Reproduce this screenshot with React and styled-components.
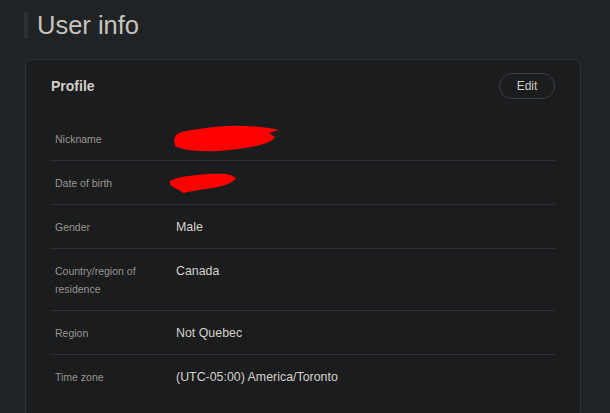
import React from "react";
import styled, { createGlobalStyle } from "styled-components";

const GlobalStyle = createGlobalStyle`
  body {
    margin: 0;
    background: #202325;
    font-family: "Liberation Sans", Arial, sans-serif;
  }
`;

const Page = styled.div`
  padding: 12px 29px 0 24px;
  min-height: 413px;
  box-sizing: border-box;
`;

const Title = styled.h1`
  margin: 0 0 20px;
  height: 27px;
  display: flex;
  align-items: center;
  border-left: 4px solid #2c3033;
  padding-left: 9px;
  font-size: 25.5px;
  font-weight: 400;
  color: #c8c3bb;
  line-height: 27px;
`;

const Card = styled.section`
  margin-left: 1px;
  background: #1b1c1e;
  border: 1px solid #2f3235;
  border-radius: 7px;
  padding: 13px 25px 20px 24px;
`;

const Header = styled.div`
  display: flex;
  justify-content: space-between;
  align-items: center;
  height: 26px;
  margin-bottom: 18px;
`;

const CardTitle = styled.h2`
  margin: 0 0 0 1px;
  font-size: 14px;
  font-weight: 700;
  color: #d2cdc6;
`;

const EditButton = styled.button`
  height: 26px;
  width: 56px;
  border-radius: 13px;
  border: 1px solid #3b3f42;
  background: transparent;
  color: #cfcac3;
  font-family: inherit;
  font-size: 12px;
  cursor: pointer;
`;

const Row = styled.div`
  display: flex;
  align-items: ${(p) => (p.$top ? "flex-start" : "center")};
  padding: 13px 5px 12px;
  border-bottom: ${(p) => (p.$last ? "none" : "1px solid #2e3033")};
`;

const Label = styled.div`
  width: 108px;
  flex-shrink: 0;
  font-size: 10.5px;
  line-height: 18px;
  color: #9a958e;
`;

const Value = styled.div`
  margin-left: 13px;
  min-height: 18px;
  font-size: 12.4px;
  line-height: 18px;
  color: #d6d1ca;
  position: relative;
`;

const ScribbleSvg = styled.svg`
  position: absolute;
  left: ${(p) => p.$x}px;
  top: ${(p) => p.$y}px;
`;

const Scribble = ({ w, h, x, y, d }) => (
  <ScribbleSvg width={w} height={h} viewBox={`0 0 ${w} ${h}`} $x={x} $y={y}>
    <path d={d} fill="#ff0000" />
  </ScribbleSvg>
);

const rows = [
  {
    label: "Nickname",
    value: (
      <Scribble
        w={108}
        h={28}
        x={-3}
        y={-5}
        d="M4 9 C10 6 18 5 26 4 C40 2 56 0 72 1 C84 1 96 3 106 5 L96 8 L102 12 C98 18 86 21 72 23 C58 25 44 27 30 26 C18 26 8 24 2 21 L1 14 Z"
      />
    ),
  },
  {
    label: "Date of birth",
    value: (
      <Scribble
        w={68}
        h={21}
        x={-7}
        y={-1}
        d="M1 8 C6 5 16 3 28 2 C40 1 52 0 62 2 L67 5 C63 11 54 13 44 15 C34 16 24 18 14 20 L10 17 C5 15 2 13 1 11 Z"
      />
    ),
  },
  { label: "Gender", value: "Male" },
  { label: "Country/region of residence", value: "Canada", top: true },
  { label: "Region", value: "Not Quebec" },
  { label: "Time zone", value: "(UTC-05:00) America/Toronto", last: true },
];

export default function App() {
  return (
    <>
      <GlobalStyle />
      <Page>
        <Title>User info</Title>
        <Card>
          <Header>
            <CardTitle>Profile</CardTitle>
            <EditButton>Edit</EditButton>
          </Header>
          {rows.map((r) => (
            <Row key={r.label} $top={r.top} $last={r.last}>
              <Label>{r.label}</Label>
              <Value>{r.value}</Value>
            </Row>
          ))}
        </Card>
      </Page>
    </>
  );
}
